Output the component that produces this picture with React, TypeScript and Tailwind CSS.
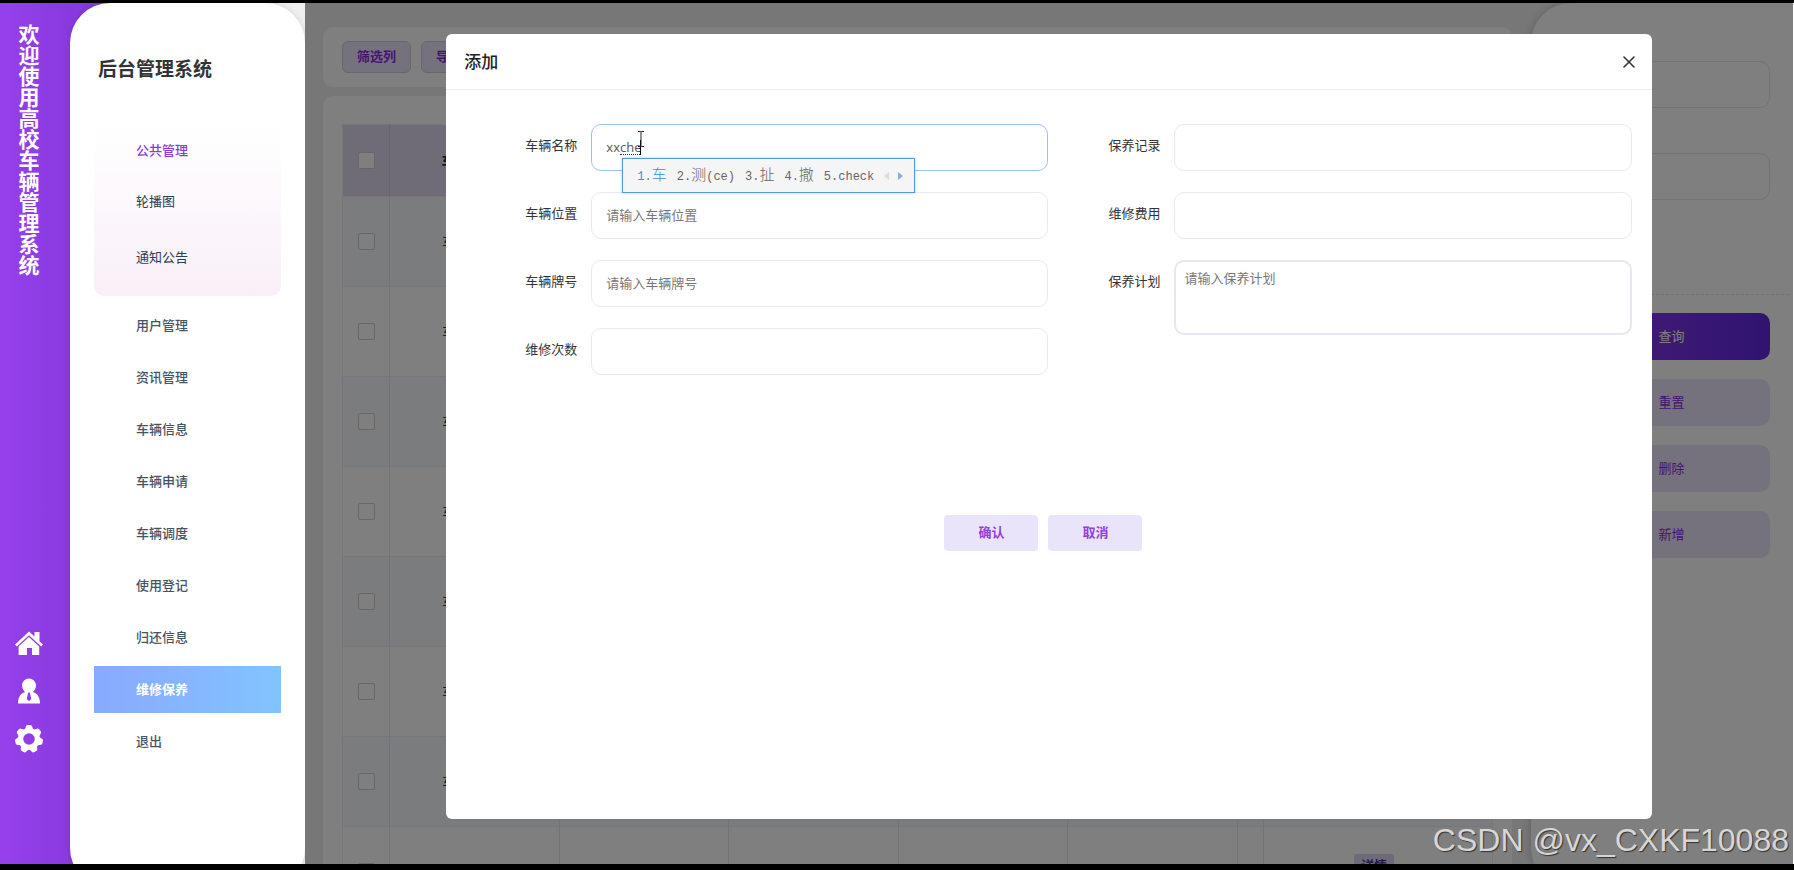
import React, { useState } from "react";

const menuItems = [
  "用户管理",
  "资讯管理",
  "车辆信息",
  "车辆申请",
  "车辆调度",
  "使用登记",
  "归还信息",
  "维修保养",
  "退出",
];

const rows = ["车辆名称1", "车辆名称2", "车辆名称3", "车辆名称4", "车辆名称5", "车辆名称6", "车辆名称7", ""];

const candidates = [
  { no: "1.", word: "车", hint: "" },
  { no: "2.", word: "测", hint: "(ce)" },
  { no: "3.", word: "扯", hint: "" },
  { no: "4.", word: "撤", hint: "" },
  { no: "5.", word: "", hint: "check" },
];

const App = () => {
  const [active, setActive] = useState("维修保养");

  return (
    <div className="h-screen w-full overflow-hidden border-t-[3px] border-b-[6px] border-black bg-black font-['Open_Sans','Noto_Sans_CJK_SC',sans-serif] text-[13px]">
      <div className="relative flex h-full overflow-hidden border-r border-white bg-[#efefef]">
        <Rail />

        {/* SIDEBAR */}
        <aside className="relative -mb-6 -ml-10 w-[235px] shrink-0 rounded-[40px] bg-white px-6 pt-[52px] shadow-[0_0_6px_rgba(0,0,0,0.12)]">
          <h1 className="pl-1 text-[19px] leading-7 font-bold text-[#333]">后台管理系统</h1>
          <nav className="mt-11 flex flex-col gap-[6px]">
            <div className="rounded-b-[10px] bg-gradient-to-b from-white to-[#f9eff8] pb-[10px]">
              <a href="#public" className="flex h-[47px] items-center pl-[42px] font-medium text-[#8a3be0]">
                公共管理
              </a>
              <a href="#banner" className="flex h-14 items-center pl-[42px] text-[#2c3e50]">
                轮播图
              </a>
              <a href="#notice" className="flex h-14 items-center pl-[42px] text-[#2c3e50]">
                通知公告
              </a>
            </div>
            <div className="flex flex-col gap-[5px]">
              {menuItems.map((item) => (
                <a
                  key={item}
                  href={`#${item}`}
                  onClick={() => setActive(item)}
                  className={`flex h-[47px] items-center pl-[42px] ${
                    item === active
                      ? "bg-gradient-to-r from-[#88a9ff] to-[#82c3ff] font-bold text-white"
                      : "font-medium text-[#465365]"
                  }`}
                >
                  {item}
                </a>
              ))}
            </div>
          </nav>
        </aside>

        {/* MAIN: list page with the dialog on top */}
        <div className="relative flex min-w-0 flex-1 overflow-hidden bg-[#efefef]">
          <ListPage />
          <FilterPanel />
          <div className="absolute inset-0 flex items-stretch justify-center bg-black/50 pt-[31px] pb-[45px]">
            <AddDialog />
          </div>
        </div>

        <div className="pointer-events-none absolute right-1 bottom-1 font-['Liberation_Sans',sans-serif] text-[32px] leading-10 text-[#d6d6d6] [text-shadow:1px_1px_1px_rgba(0,0,0,0.6)]">
          CSDN @vx_CXKF10088
        </div>
      </div>
    </div>
  );
};

const Rail = () => (
  <div className="flex w-[110px] shrink-0 flex-col items-start justify-between bg-gradient-to-r from-[#9640eb] to-[#8237d8] pb-[111px]">
    <div className="flex w-14 justify-center pt-[21px]">
      <p className="text-[21px] leading-6 font-bold text-white [writing-mode:vertical-rl]">
        欢迎使用高校车辆管理系统
      </p>
    </div>
    <div className="flex w-[57px] flex-col items-center gap-5 text-white">
      <button aria-label="首页">
        <svg width="28" height="28" viewBox="0 0 28 28" fill="currentColor">
          <path d="M14 2.5 19.5 7.6V3h5v9.2L28 15.4l-1.8 2L14 6.2 1.8 17.4 0 15.4Z" />
          <path d="M14 8 24.2 17.4V26H17v-7h-5v7H3.6v-8.6Z" />
        </svg>
      </button>
      <button aria-label="用户">
        <svg width="28" height="28" viewBox="0 0 28 28" fill="currentColor">
          <path
            fillRule="evenodd"
            d="M14 1.5a7 7 0 0 1 7 7c0 3-1.500 5-3 6.500 4.500 1.500 7 5 7 11.500H3c0-6.500 2.500-10 7-11.500-1.500-1.500-3-3.500-3-6.500a7 7 0 0 1 7-7Zm-.8 13.900-1.500 6.600 2.300 2 2.300-2-1.500-6.600Z"
          />
        </svg>
      </button>
      <button aria-label="设置">
        <svg width="28" height="28" viewBox="0 0 28 28" fill="none">
          <circle cx="14" cy="14" r="8.300" stroke="currentColor" strokeWidth="5" />
          <g fill="currentColor">
            {[0, 51.4, 102.9, 154.3, 205.7, 257.1, 308.6].map((deg) => (
              <path key={deg} d="M9.500 5 11 1.200Q11.400 0 12.600 0h2.800Q16.600 0 17 1.200L18.500 5Z" transform={`rotate(${deg} 14 14)`} />
            ))}
          </g>
        </svg>
      </button>
    </div>
  </div>
);

const ListPage = () => (
  <div className="flex min-w-0 flex-1 flex-col gap-[9px] pt-6 pr-[19px] pl-[18px]">
    <div className="flex h-[60px] shrink-0 items-center gap-[10px] rounded-[10px] bg-white px-[19px]">
      <button className="h-8 rounded-md border border-[#d3cce3] bg-[#eae4fa] px-[14px] font-bold text-[#8a2be2]">
        筛选列
      </button>
      <button className="h-8 rounded-md border border-[#d3cce3] bg-[#eae4fa] px-[14px] font-bold text-[#8a2be2]">
        导出
      </button>
    </div>
    <div className="shrink-0 rounded-[10px] bg-white px-[19px] pt-7">
      <table className="w-full table-fixed border-collapse border border-[#ebeef5] text-center">
        <colgroup>
          <col className="w-[47px]" />
          <col />
          <col />
          <col />
          <col />
          <col />
          <col className="w-[26px]" />
          <col className="w-[229px]" />
        </colgroup>
        <thead>
          <tr className="h-[72px] bg-[#ded8f0]">
            <th className="border-r border-[#d0cae0]">
              <Check label="全选" />
            </th>
            <th className="pr-[10px] text-[14px] font-bold text-[#333]">车辆名称</th>
            <th />
            <th />
            <th />
            <th />
            <th />
            <th />
          </tr>
        </thead>
        <tbody className="text-[14px] text-[#333]">
          {rows.map((name, i) => (
            <tr key={i} className="h-[90px] border-t border-[#ebeef5] odd:bg-[#f7f9fd]">
              <td className="border-r border-[#e4e7ee]">
                <Check label={`选择第${i + 1}行`} />
              </td>
              <td className="border-r border-[#e4e7ee]">{name}</td>
              <td className="border-r border-[#e4e7ee]" />
              <td className="border-r border-[#e4e7ee]" />
              <td className="border-r border-[#e4e7ee]" />
              <td className="border-r border-[#e4e7ee]" />
              <td className="border-r border-[#e4e7ee]" />
              <td>
                <button className="mr-2 mb-3 h-6 w-10 rounded-xs bg-[#ddd5f3] text-[13px] font-bold text-[#4b3a90]">
                  详情
                </button>
              </td>
            </tr>
          ))}
        </tbody>
      </table>
    </div>
  </div>
);

const Check = ({ label }: { label: string }) => (
  <input
    type="checkbox"
    aria-label={label}
    className="mx-auto block h-[17px] w-[17px] appearance-none rounded-xs border border-[#cfcfcf] bg-white"
  />
);

const FilterPanel = () => (
  <div className="-mb-6 w-[262px] shrink-0 rounded-l-[40px] bg-white pt-[58px] shadow-[0_0_10px_rgba(0,0,0,0.2)]">
    <div className="flex flex-col gap-[45px] pr-[23px] pl-[42px]">
      <input aria-label="车辆名称筛选" className="h-[47px] w-full rounded-[10px] border border-[#e2e6ea]" />
      <input aria-label="车辆牌号筛选" className="h-[47px] w-full rounded-[10px] border border-[#e2e6ea]" />
    </div>
    <div className="mt-[94px] mr-1 border-t border-dashed border-[#e4e4e4]" />
    <div className="mt-[18px] flex flex-col gap-[19px] pr-[23px] pl-[42px]">
      <button className="h-[47px] rounded-[10px] bg-gradient-to-r from-[#9038f0] to-[#5f28e0] text-white">查询</button>
      <button className="h-[47px] rounded-[10px] bg-[#eae4fa] text-[#8a2be2]">重置</button>
      <button className="h-[47px] rounded-[10px] bg-[#eae4fa] text-[#8a2be2]">删除</button>
      <button className="h-[47px] rounded-[10px] bg-[#eae4fa] text-[#8a2be2]">新增</button>
    </div>
  </div>
);

type FieldProps = {
  id: string;
  label: string;
  children: React.ReactNode;
};

const Field = ({ id, label, children }: FieldProps) => (
  <div className="flex items-start">
    <label htmlFor={id} className="w-[126px] shrink-0 pr-[14px] text-right leading-[43px] text-[#333]">
      {label}
    </label>
    <div className="relative flex min-w-0 flex-1">{children}</div>
  </div>
);

const inputClass =
  "h-[47px] w-full rounded-[10px] border border-[#e6e9f0] bg-white px-[14px] pb-[2px] text-[#555] outline-none placeholder:text-[#777]";

const AddDialog = () => {
  const [name, setName] = useState("xxche");

  return (
    <div role="dialog" aria-label="添加" className="w-[81%] rounded-md bg-white">
      <div className="flex h-14 items-center justify-between border-b border-[#eee] pr-4 pl-[18px]">
        <h2 className="text-[17px] font-medium text-[#222]">添加</h2>
        <button aria-label="关闭">
          <svg width="14" height="14" viewBox="0 0 14 14" stroke="#333" strokeWidth="1.6" strokeLinecap="round">
            <path d="M2 2 12 12M12 2 2 12" />
          </svg>
        </button>
      </div>

      <form className="pr-5 pl-[19px] pt-[34px]" onSubmit={(e) => e.preventDefault()}>
        <div className="grid grid-cols-2">
          <div className="flex flex-col gap-[21px]">
            <Field id="name" label="车辆名称">
              <input
                id="name"
                value={name}
                onChange={(e) => setName(e.target.value)}
                className="h-[47px] w-full rounded-[10px] border border-[#9fc0ee] bg-white px-[14px] pb-[2px] text-[#555] outline-none"
              />
              <Composing />
            </Field>
            <Field id="place" label="车辆位置">
              <input id="place" placeholder="请输入车辆位置" className={inputClass} />
            </Field>
            <Field id="plate" label="车辆牌号">
              <input id="plate" placeholder="请输入车辆牌号" className={inputClass} />
            </Field>
            <Field id="times" label="维修次数">
              <input id="times" className={inputClass} />
            </Field>
          </div>
          <div className="flex flex-col gap-[21px]">
            <Field id="record" label="保养记录">
              <input id="record" className={inputClass} />
            </Field>
            <Field id="cost" label="维修费用">
              <input id="cost" className={inputClass} />
            </Field>
            <Field id="plan" label="保养计划">
              <textarea
                id="plan"
                placeholder="请输入保养计划"
                className="h-[75px] w-full resize-none rounded-[10px] border-2 border-[#e4e8f0] bg-white px-2 py-[6px] leading-5 outline-none placeholder:text-[#777]"
              />
            </Field>
          </div>
        </div>
        <div className="mt-[140px] flex justify-center">
          <button className="mr-[10px] h-9 w-[94px] rounded bg-[#eae4fa] font-bold text-[#9040dd]">确认</button>
          <button className="mr-[10px] h-9 w-[94px] rounded bg-[#eae4fa] font-bold text-[#9040dd]">取消</button>
        </div>
      </form>
    </div>
  );
};

// Pinyin input: underline, caret, mouse cursor and candidate bar
const Composing = () => (
  <>
    <span className="absolute top-[30px] left-[29px] w-5 border-b border-dotted border-[#333]" />
    <span className="absolute top-4 left-[49px] h-[15px] w-px bg-black" />
    <svg className="absolute top-[7px] left-[46px]" width="8" height="17" viewBox="0 0 8 17" fill="none" stroke="#222">
      <path d="M1 .5h2.500L4 1l.5-.5H7M4 1v14M1 15.500h2.500L4 15l.5.5H7" />
    </svg>
    <div className="absolute top-[34px] left-[31px] z-10 flex h-[35px] w-[293px] items-center gap-[10px] border border-[#5596dc] bg-[#f5f5f5] pl-[14px] text-[15px] text-[#666] shadow-[0_0_3px_rgba(120,200,255,0.7)]">
      <div className="flex items-baseline gap-[10px] leading-5">
        {candidates.map((c, i) => (
          <span key={c.no} className={`flex items-baseline whitespace-nowrap ${i === 0 ? "text-[#3a8fdd]" : ""}`}>
            <span className="font-['Liberation_Mono',monospace] text-[12px]">{c.no}</span>
            {c.word && <span className="font-['Noto_Sans_CJK_SC',sans-serif] font-light">{c.word}</span>}
            {c.hint && <span className="font-['Liberation_Mono',monospace] text-[12px]">{c.hint}</span>}
          </span>
        ))}
      </div>
      <svg width="20" height="10" viewBox="0 0 20 10">
        <path d="M5 1v8L0 5Z" fill="#dcdcdc" />
        <path d="M14 1v8l5-4Z" fill="#7fb2f0" />
      </svg>
    </div>
  </>
);

export default App;
